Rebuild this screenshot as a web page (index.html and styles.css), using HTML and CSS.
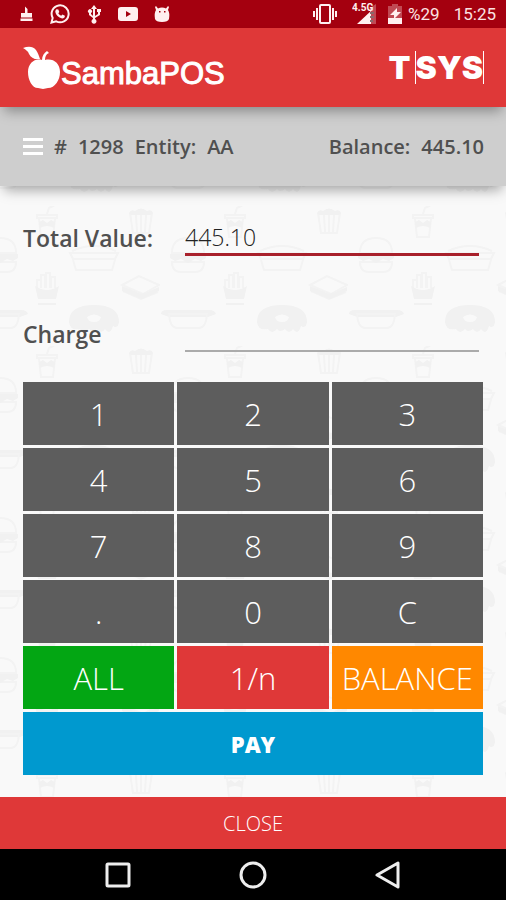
FILE: index.html
```html
<!DOCTYPE html>
<html lang="en">
<head>
<meta charset="utf-8">
<meta name="viewport" content="width=device-width, initial-scale=1">
<title>SambaPOS</title>
<link rel="stylesheet" href="styles.css">
</head>
<body>
<div class="status">
	<svg class="sicon" viewBox="0 0 20 20"><path d="M9 2.500l2.500 2.500v4H16v4.500H5V9h4zM4.500 14.500h12V17h-12z"/></svg>
	<svg class="sicon" viewBox="0 0 20 20"><path class="line" d="M1.500 18.500l1.200-4.600a8.500 8.500 0 1 1 3.500 3.400z"/><path d="M6.500 5.200l1.800.2 1 2.600-1 1.200c.7 1.300 1.600 2 2.900 2.600l1.200-1.300 2.500 1.200c.1 1.800-1.300 2.800-2.700 2.700-3.600-.5-6.500-3.600-6.900-6.600 0-1 .4-2 1.200-2.600z"/></svg>
	<svg class="sicon" viewBox="0 0 20 20"><path d="M10 1l3 4h-2v7l3-2V8h-1V5h4v3h-1v3l-5 3v1a2.500 2.500 0 1 1-2 0v-1l-4-3V9a2 2 0 1 1 2 0v1l2 2V5H7z"/></svg>
	<svg class="sicon" viewBox="0 0 20 20"><path fill-rule="evenodd" d="M3 3h14q3 0 3 3v8q0 3-3 3H3q-3 0-3-3V6q0-3 3-3zm5 4v6l5-3z"/></svg>
	<svg class="sicon" viewBox="0 0 20 20"><path fill-rule="evenodd" d="M4 2l2 2.500q4-2 8 0L16 2l1 1-1 3q2 3 1 9-1 3-7 3t-7-3q-1-6 1-9L3 3zm3 5v1.500h1.500V7zm5 0v1.500h1.500V7z"/></svg>
	<span class="spacer"></span>
	<svg class="vibrate" viewBox="0 0 26 20"><rect class="line" x="8" y="1" width="10" height="18" rx="1"/><path class="line" d="M5 4v12M2 7v6M21 4v12M24 7v6"/></svg>
	<svg class="signal" viewBox="0 0 26 22"><path class="faded" d="M24 1v20H6L18 9V5z"/><path d="M19 8v13H5z"/><path class="mark" d="M18 9h4v2h-4zM18 13h4v2h-4zM18 17h3v2h-3z"/><text x="0" y="8">4.5G</text></svg>
	<svg class="battery" viewBox="0 0 14 20"><path class="faded" d="M4 0h6v2h4v18H0V2h4z"/><path d="M0 14h14v6H0zM9 4v4h4l-7 7v-4H2z"/></svg>
	<span class="percent">%29</span>
	<span class="clock">15:25</span>
</div>

<header class="header">
	<div class="logo">
		<svg class="apple" viewBox="0 0 38 44"><path d="M0 2c5-2 10-2 13 2 2 3 3 6 4 9-5 1-9-1-11-5-1-3-3-4-6-6z"/><path d="M19 14c0-4 2-7 5-9l2 2c-3 1-4 4-4 7 8-2 15 3 15 12 0 8-5 16-12 16l-5 1-5-1C9 42 5 34 5 26c0-9 7-14 14-12z"/></svg>
		<span>SambaPOS</span>
	</div>
	<div class="tsys">T<span>SYS</span></div>
</header>

<div class="info">
	<button class="menu" type="button" aria-label="Menu"><i></i><i></i><i></i></button>
	<span>#</span>
	<span>1298</span>
	<span>Entity:</span>
	<span>AA</span>
	<span class="spacer"></span>
	<span>Balance:</span>
	<span>445.10</span>
</div>

<main class="main">
	<!-- food pattern behind the form -->
	<svg class="pattern" aria-hidden="true">
		<defs>
			<pattern id="food" x="-28" y="20" width="188" height="140" patternUnits="userSpaceOnUse">
				<!-- cup -->
				<path class="p-line" d="M65 9h20v3H65zM67 13l2 18h12l2-18M75 8l2-6 6-3"/>
				<path class="p-fill" d="M67 16l4-2 4 3 4-3 4 2-1 6q-7-4-14 0z"/>
				<!-- popcorn tub -->
				<path class="p-line" d="M158 7l3 20h16l3-20M164 9l1 17M169 9v17M174 9l-1 17"/>
				<path class="p-fill" d="M157 7q2-4 6-2 6-5 12 0 5-2 6 2l-2 2h-20z"/>
				<!-- burger -->
				<path class="p-line" d="M12 47q0-15 16-15t16 15zM12 56h32q0 10-9 10H21q-9 0-9-10z"/>
				<path class="p-fill" d="M10 48h36v4l-5 3-6-2-7 4-7-4-6 2-5-3z"/>
				<!-- tray -->
				<path class="p-line" d="M98 47h48l-3 6H101zM101 54l3 10h36l3-10M100 45q22-10 44 0"/>
				<!-- fries -->
				<path class="p-line" d="M65 83V74h4v8M69 82V69h4v13M74 82V67h4v15M79 82V71h4v11"/>
				<path class="p-fill" d="M63 80q12 8 24 0l-3 13H66zM66 97h18v2H66z"/>
				<!-- sandwich -->
				<path class="p-line" d="M150 79l17-9 20 9-16 9zM151 85l18 8 17-7"/>
				<path class="p-fill" d="M150 80l20 8 17-7v4l-17 8-20-8z"/>
				<!-- donut -->
				<path class="p-fill" fill-rule="evenodd" d="M97 116q0-17 25-17t25 17q-1 7-6 4-3 10-8 3-4 6-8 0-5 4-8 0-5 6-9 0-10 2-11-7zm18-5q1 5 7 5t7-5q-7-5-14 0z"/>
				<!-- hot dog -->
				<path class="p-fill" d="M1 108q0-4 6-4h42q6 0 7 4l-8 3H9z"/>
				<path class="p-line" d="M9 108h38q-1 14-8 14H17q-7 0-8-14z"/>
			</pattern>
		</defs>
		<rect width="100%" height="100%" fill="url(#food)"/>
	</svg>

	<form class="form">
		<label for="total">Total Value:</label>
		<input id="total" class="field active" type="text" value="445.10">
		<label for="charge">Charge</label>
		<input id="charge" class="field" type="text">
	</form>

	<div class="keypad">
		<button type="button">1</button>
		<button type="button">2</button>
		<button type="button">3</button>
		<button type="button">4</button>
		<button type="button">5</button>
		<button type="button">6</button>
		<button type="button">7</button>
		<button type="button">8</button>
		<button type="button">9</button>
		<button type="button">.</button>
		<button type="button">0</button>
		<button type="button">C</button>
		<button type="button" class="all">ALL</button>
		<button type="button" class="split">1/n</button>
		<button type="button" class="balance">BALANCE</button>
		<button type="button" class="pay">PAY</button>
	</div>
</main>

<button class="close" type="button">CLOSE</button>

<nav class="nav">
	<button type="button" aria-label="Recent"><svg viewBox="0 0 28 28"><rect x="3" y="3" width="22" height="22" rx="1"/></svg></button>
	<button type="button" aria-label="Home"><svg viewBox="0 0 28 28"><circle cx="14" cy="14" r="12"/></svg></button>
	<button type="button" aria-label="Back"><svg viewBox="0 0 28 28"><path d="M24 2v24L3 14z"/></svg></button>
</nav>
</body>
</html>
```
FILE: styles.css
```css
*{
	box-sizing: border-box;
}
body{
	margin: 0;
	min-height: 100vh;
	display: flex;
	flex-direction: column;
	background-color: #f9f9f9;
	font-family: "Open Sans", "Noto Sans", sans-serif;
	color: #505050;
}
button{
	border: 0;
	padding: 0;
	font-family: inherit;
	color: #fff;
	cursor: pointer;
}
.spacer{
	flex: 1;
}

/* status bar */
.status{
	display: flex;
	align-items: center;
	gap: 14px;
	height: 28px;
	padding: 0 10px 0 16px;
	background-color: #a4000f;
	color: #fbe3e3;
	font-family: Roboto, sans-serif;
	font-size: 17px;
}
.status svg{
	fill: #fff0f0;
	flex: none;
}
.status .line{
	fill: none;
	stroke: #fff0f0;
	stroke-width: 2;
}
.status .faded{
	fill: #c04a54;
}
.status .mark{
	fill: #8a6a6c;
}
.sicon{
	width: 20px;
	height: 20px;
}
.vibrate{
	width: 26px;
	height: 20px;
}
.signal{
	width: 26px;
	height: 22px;
	margin-right: -4px;
}
.signal text{
	font-size: 10px;
	font-weight: 700;
}
.battery{
	width: 14px;
	height: 20px;
}
.percent{
	margin-left: -8px;
}

/* header */
.header{
	display: flex;
	align-items: center;
	justify-content: space-between;
	height: 79px;
	padding: 0 22px 0 23px;
	background-color: #df3838;
	color: #fff;
	position: relative;
	z-index: 2;
	box-shadow: 0 8px 12px -4px rgba(0,0,0,.35);
}
.logo{
	display: flex;
	align-items: center;
	font-family: "Liberation Sans", Arial, sans-serif;
	font-size: 31px;
	-webkit-text-stroke: 1px #fff;
}
.logo span{
	padding-top: 12px;
}
.apple{
	width: 38px;
	height: 44px;
	fill: #fff;
}
.tsys{
	display: flex;
	align-items: center;
	gap: 4px;
	font-family: Inter, sans-serif;
	font-size: 32px;
	font-weight: 900;
	line-height: 33px;
}
.tsys span{
	border-left: 1px solid #fff;
	border-right: 1px solid #fff;
}

/* order info */
.info{
	display: flex;
	align-items: center;
	gap: 11px;
	height: 79px;
	padding: 0 22px 0 23px;
	background-color: #cecece;
	font-size: 20px;
	font-weight: 600;
	position: relative;
	z-index: 1;
	box-shadow: 0 8px 12px -4px rgba(0,0,0,.35);
}
.menu{
	display: flex;
	flex-direction: column;
	gap: 4px;
	width: 20px;
	background: none;
}
.menu i{
	height: 3px;
	background-color: #fff;
}

/* form and keypad */
.main{
	flex: 1;
	position: relative;
	padding: 34px 23px 22px;
}
.pattern{
	position: absolute;
	top: 0;
	left: 0;
	width: 100%;
	height: 100%;
}
.p-line{
	fill: none;
	stroke: #f3f3f3;
	stroke-width: 2;
}
.p-fill{
	fill: #f1f1f1;
}
.form{
	position: relative;
	display: grid;
	grid-template-columns: 162px 1fr;
	row-gap: 60px;
	align-items: center;
	padding-right: 4px;
	margin-bottom: 30px;
	font-size: 23px;
	font-weight: 600;
}
.field{
	width: 100%;
	height: 36px;
	border: 0;
	border-bottom: 2px solid #ababab;
	padding: 0;
	background: none;
	font-family: inherit;
	font-size: 23px;
	font-weight: 300;
	color: #222;
	outline: none;
}
.active{
	border-bottom: 3px solid #a8202b;
}
.keypad{
	position: relative;
	display: grid;
	grid-template-columns: repeat(3, 1fr);
	grid-auto-rows: 63px;
	gap: 3px;
}
.keypad button{
	background-color: #5d5d5d;
	font-size: 31px;
	font-weight: 300;
}
.keypad .all{
	background-color: #03a613;
}
.keypad .split{
	background-color: #df3838;
}
.keypad .balance{
	background-color: #ff8800;
}
.keypad .pay{
	grid-column: 1 / -1;
	background-color: #0099cf;
	font-size: 22px;
	font-weight: 800;
}

/* bottom */
.close{
	height: 52px;
	background-color: #df3838;
	font-size: 20px;
	font-weight: 300;
}
.nav{
	display: flex;
	justify-content: center;
	align-items: center;
	gap: 107px;
	height: 51px;
	background-color: #000;
}
.nav button{
	width: 28px;
	height: 28px;
	background: none;
}
.nav svg{
	display: block;
	fill: none;
	stroke: #eee;
	stroke-width: 3;
	stroke-linejoin: round;
}
```
